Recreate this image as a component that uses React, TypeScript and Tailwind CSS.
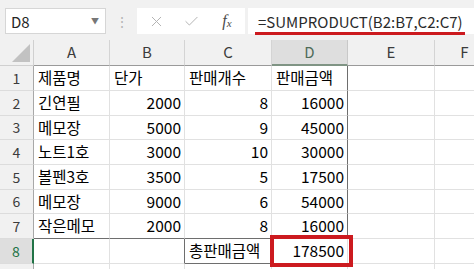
import { Check, X } from "lucide-react";

const COLS = ["A", "B", "C", "D", "E", "F"];
const COL_W = ["w-[76px]", "w-[75px]", "w-[87px]", "w-[76px]", "w-[87px]", "w-[60px]"];
const ROW_H = ["h-[25px]", "h-[25px]", "h-[24px]", "h-[25px]", "h-[25px]", "h-[24px]", "h-[25px]", "h-[25px]", "h-[25px]"];

type Cell = { v: string; num?: boolean };

const DATA: Cell[][] = [
  [{ v: "제품명" }, { v: "단가" }, { v: "판매개수" }, { v: "판매금액" }],
  [{ v: "긴연필" }, { v: "2000", num: true }, { v: "8", num: true }, { v: "16000", num: true }],
  [{ v: "메모장" }, { v: "5000", num: true }, { v: "9", num: true }, { v: "45000", num: true }],
  [{ v: "노트1호" }, { v: "3000", num: true }, { v: "10", num: true }, { v: "30000", num: true }],
  [{ v: "볼펜3호" }, { v: "3500", num: true }, { v: "5", num: true }, { v: "17500", num: true }],
  [{ v: "메모장" }, { v: "9000", num: true }, { v: "6", num: true }, { v: "54000", num: true }],
  [{ v: "작은메모" }, { v: "2000", num: true }, { v: "8", num: true }, { v: "16000", num: true }],
  [{ v: "" }, { v: "" }, { v: "총판매금액" }, { v: "178500", num: true }],
  [],
];

const font = "font-['Malgun_Gothic','Noto_Sans_CJK_KR',sans-serif]";

function borderFor(r: number, c: number) {
  // r: 0-based data row, c: 0-based column
  const inTable = r <= 6 && c <= 3;
  let right = "border-r-[#e1e1e1]";
  let bottom = "border-b-[#e1e1e1]";
  if (inTable && c === 3) right = "border-r-[#6e6e6e]";
  if (r === 6 && c <= 3) bottom = "border-b-[#6e6e6e]";
  if (r === 7 && c === 2) {
    right = "border-r-[#6e6e6e]";
    bottom = "border-b-[#6e6e6e]";
  }
  if (r === 7 && c === 1) right = "border-r-[#6e6e6e]";
  return `border-r border-b ${right} ${bottom}`;
}

export default function App() {
  return (
    <div className={`w-[474px] h-[269px] overflow-hidden bg-white ${font}`}>
      {/* formula bar */}
      <div className="relative h-[40px] bg-[#f1f1f1] flex pl-[5px] pt-[8px]">
        <div className="w-[101px] h-[26px] bg-white border border-[#d6d6d6] flex items-center justify-between pl-[5px] pr-[6px]">
          <span className="text-[15px] text-[#262626] leading-none">D8</span>
          <span className="text-[8px] text-[#777]">▼</span>
        </div>
        <div className="w-[31px] h-[26px] flex items-center justify-center text-[#b5b5b5] text-[14px] leading-none">⋮</div>
        <div className="w-[108px] h-[26px] bg-white flex items-center">
          <div className="w-[36px] flex justify-center pl-[2px]">
            <X size={17} strokeWidth={1.4} color="#b3b3b3" />
          </div>
          <div className="w-[36px] flex justify-center">
            <Check size={17} strokeWidth={1.4} color="#b3b3b3" />
          </div>
          <div className="w-[36px] flex justify-center font-['Liberation_Serif',serif] italic text-[#4a4a4a] text-[16px] leading-none">
            f<span className="text-[11px] mt-[5px]">x</span>
          </div>
        </div>
        <div className="ml-[3px] flex-1 h-[26px] bg-white flex items-center pl-[10px]">
          <span className="text-[15px] text-[#2b2b2b] leading-none">=SUMPRODUCT(B2:B7,C2:C7)</span>
        </div>
        <div className="absolute left-[255px] top-[32px] w-[210px] h-[3px] bg-[#cc1a1f]" />
      </div>

      {/* sheet */}
      <div className="relative">
        <div className="flex h-[26px] bg-[#f1f1f1]">
          <div className="w-[34px] shrink-0 relative border-r border-b border-[#d0d0d0]">
            <div className="absolute right-[3px] bottom-[3px] w-0 h-0 border-l-[18px] border-l-transparent border-b-[18px] border-b-[#c2c2c2]" />
          </div>
          {COLS.map((c, i) => (
            <div
              key={c}
              className={`${COL_W[i]} shrink-0 flex items-center justify-center text-[15px] border-r ${
                c === "D"
                  ? "bg-[#dedede] text-[#4f6b58] border-r-[#c8c8c8] border-b-2 border-b-[#7f9484]"
                  : "text-[#3c3c3c] border-r-[#d4d4d4] border-b border-b-[#9a9a9a]"
              }`}
            >
              {c}
            </div>
          ))}
        </div>

        {DATA.map((row, r) => (
          <div key={r} className={`flex ${ROW_H[r]}`}>
            <div
              className={`w-[34px] shrink-0 flex items-center justify-center text-[14px] border-b border-b-[#dcdcdc] ${
                r === 7
                  ? "bg-[#dedede] text-[#217346] border-r-2 border-r-[#217346]"
                  : "bg-[#f1f1f1] text-[#3c3c3c] border-r border-r-[#a8a8a8]"
              }`}
            >
              {r < 8 ? r + 1 : ""}
            </div>
            {COLS.map((_, c) => {
              const cell = row[c];
              return (
                <div
                  key={c}
                  className={`${COL_W[c]} shrink-0 flex items-center whitespace-nowrap text-[15.5px] text-black ${borderFor(r, c)} ${
                    cell?.num ? "justify-end pr-[3px]" : "pl-[4px]"
                  }`}
                >
                  {cell?.v}
                </div>
              );
            })}
          </div>
        ))}

        {/* highlight on D8 */}
        <div className="absolute left-[270px] top-[195px] w-[83px] h-[32px] border-4 border-[#cc1a1f] pointer-events-none" />
      </div>
    </div>
  );
}
